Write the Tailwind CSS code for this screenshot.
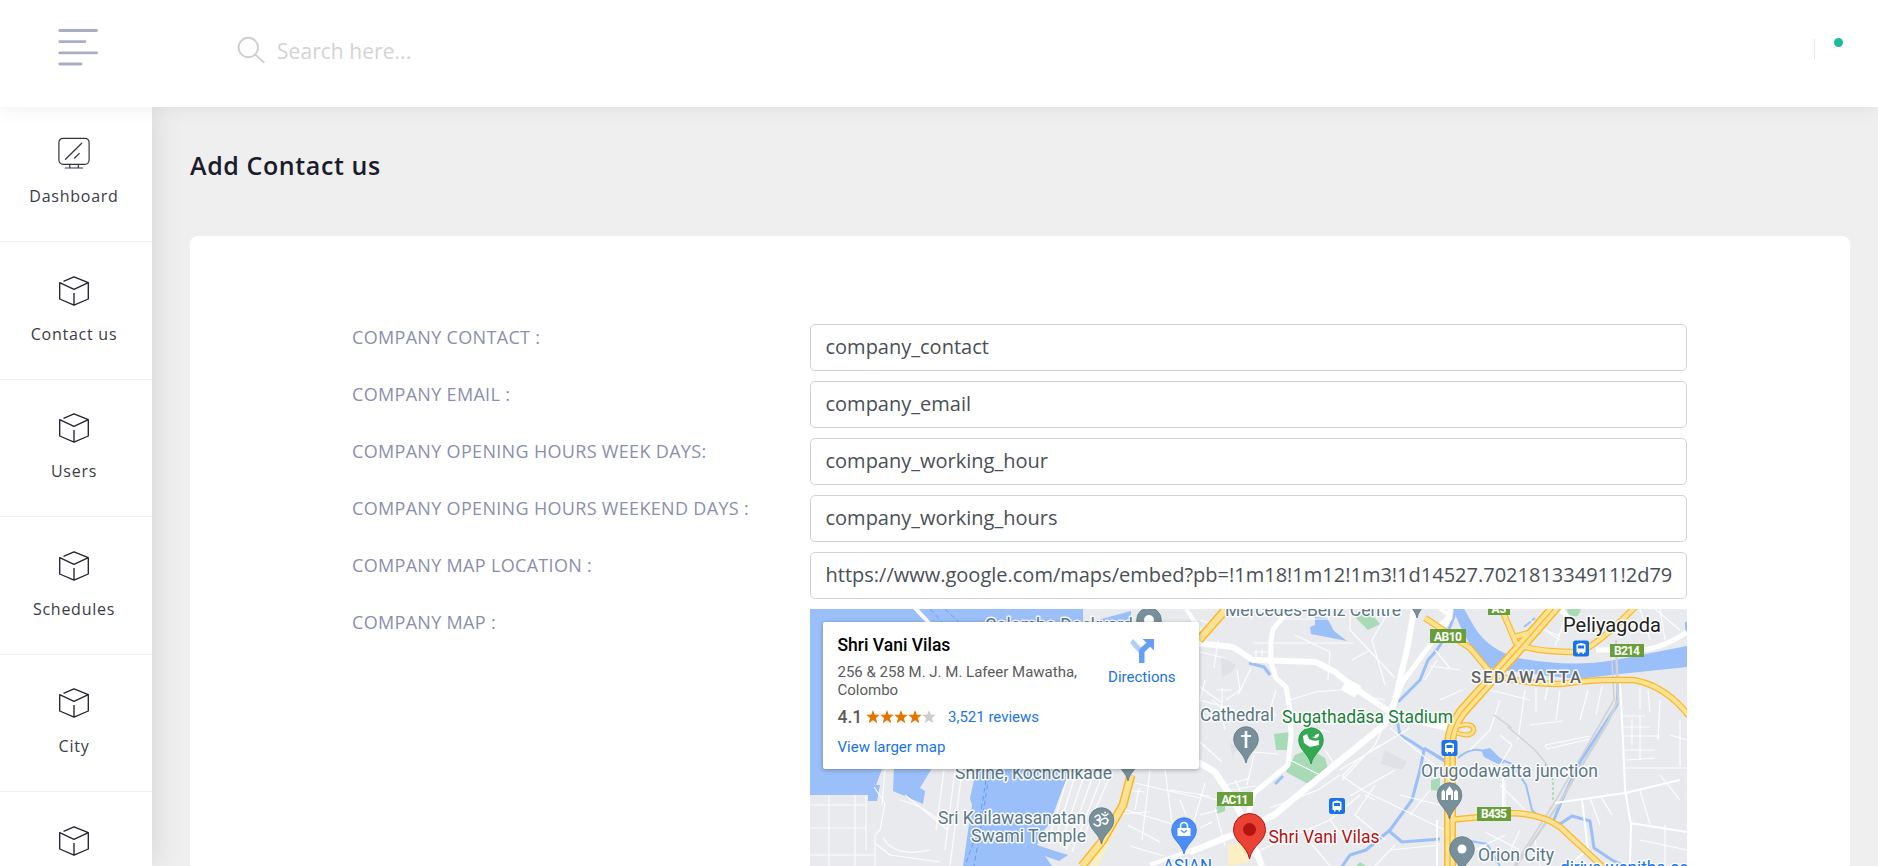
<!DOCTYPE html>
<html lang="en">
<head>
<meta charset="utf-8">
<title>Add Contact us</title>
<script src="https://cdn.jsdelivr.net/npm/@tailwindcss/browser@4"></script>
</head>
<body class="h-[866px] overflow-hidden bg-[#efefef] font-['Open_Sans',sans-serif] flex flex-col">
<svg class="hidden">
  <symbol id="cube" viewBox="0 0 32 32"><path d="M5.5 6.3 16 1.8 30.3 7.6V24L16 30.2 1.7 24V7.6L16 14.3 30.3 7.6M16 18v12" fill="none" stroke="#24242f" stroke-width="1.35" stroke-linejoin="round"/></symbol>
  <symbol id="pin" viewBox="-14 -14 28 40" overflow="visible"><path d="M0 24C-2.5 13-12.3 10-12.3 0a12.3 12.3 0 1 1 24.6 0C12.3 10 2.5 13 0 24Z"/></symbol>
</svg>

<header class="relative z-20 flex h-[107px] shrink-0 items-start bg-white shadow-[0_0_20px_rgba(0,0,0,0.08)]">
  <svg class="mt-[28px] ml-[58px]" width="40" height="40" viewBox="0 0 40 40" stroke="#a9aec6" stroke-width="2.8" stroke-linecap="round"><path d="M1.8 2.5H38.5M1.8 13.6H27M1.8 24.9H38.5M1.8 36H23"/></svg>
  <svg class="mt-[36px] ml-[139px]" width="29" height="29" viewBox="0 0 29 29" fill="none" stroke="#cfcfcf" stroke-width="1.9" stroke-linecap="round"><circle cx="11.3" cy="11.5" r="9.7"/><path d="M18.3 18.6 26.7 26.2"/></svg>
  <span class="mt-[36px] ml-[11px] text-[21px] leading-[30px] tracking-[0.05px] text-[#d3d3d3]">Search here...</span>
  <div class="mt-[38px] mr-[35px] ml-auto flex">
    <div class="mt-px h-5 w-px bg-[#e3e6ea]"></div>
    <div class="ml-[19px] size-[9px] rounded-full bg-[#1abc9c]"></div>
  </div>
</header>

<div class="flex min-h-0 flex-1">
  <nav class="z-10 flex w-[152px] shrink-0 flex-col overflow-visible bg-white pr-[4px] text-[16px] tracking-[0.75px] text-[#3b3b47] shadow-[0_0_30px_rgba(0,0,0,0.12)]">
    <a class="-mr-[4px] flex h-[135px] shrink-0 flex-col items-center border-b border-[#efefef] pt-[30px] pr-[4px]">
      <svg width="32" height="32" viewBox="0 0 32 32" fill="none" stroke="#343441" stroke-width="1.2" stroke-linecap="round"><rect x=".9" y="1.3" width="30.2" height="26" rx="4.2"/><path d="M7.5 22.3 23.7 6.2M16.4 21.2 21.3 16.4M11.8 27.3V31M20.3 27.3V31M7.3 31H24.5"/></svg>
      <span class="mt-[15px] leading-6">Dashboard</span></a>
    <a class="-mr-[4px] flex h-[137.5px] shrink-0 flex-col items-center border-b border-[#efefef] pt-[32.5px] pr-[4px]"><svg width="32" height="32"><use href="#cube"/></svg><span class="mt-[15px] leading-6">Contact us</span></a>
    <a class="-mr-[4px] flex h-[137.5px] shrink-0 flex-col items-center border-b border-[#efefef] pt-[32.5px] pr-[4px]"><svg width="32" height="32"><use href="#cube"/></svg><span class="mt-[15px] leading-6">Users</span></a>
    <a class="-mr-[4px] flex h-[137.5px] shrink-0 flex-col items-center border-b border-[#efefef] pt-[32.5px] pr-[4px]"><svg width="32" height="32"><use href="#cube"/></svg><span class="mt-[15px] leading-6">Schedules</span></a>
    <a class="-mr-[4px] flex h-[137.5px] shrink-0 flex-col items-center border-b border-[#efefef] pt-[32.5px] pr-[4px]"><svg width="32" height="32"><use href="#cube"/></svg><span class="mt-[15px] leading-6">City</span></a>
    <a class="-mr-[4px] flex shrink-0 flex-col items-center pt-[32.5px] pr-[4px]"><svg width="32" height="32"><use href="#cube"/></svg></a>
  </nav>

  <main class="flex min-w-0 flex-1 flex-col pt-[40px] pr-[28px] pl-[38px]">
    <h1 class="text-[25px] leading-[36px] font-semibold tracking-[0.6px] text-[#1b1b2b]">Add Contact us</h1>
    <section class="mt-[53px] flex flex-1 rounded-t-lg bg-white pt-[88px] pl-[162px]">
      <div class="flex w-[458px] flex-col text-[18px] leading-[27px] tracking-[0.32px] text-[#8a8fad]">
        <label class="h-[57px] shrink-0">COMPANY CONTACT :</label>
        <label class="h-[57px] shrink-0">COMPANY EMAIL :</label>
        <label class="h-[57px] shrink-0">COMPANY OPENING HOURS WEEK DAYS:</label>
        <label class="h-[57px] shrink-0">COMPANY OPENING HOURS WEEKEND DAYS :</label>
        <label class="h-[57px] shrink-0">COMPANY MAP LOCATION :</label>
        <label class="h-[57px] shrink-0">COMPANY MAP :</label>
      </div>
      <div class="flex w-[877px] flex-col text-[20px] text-[#495057]">
        <input class="mb-[10px] h-[47px] shrink-0 rounded-[5px] border border-[#ced4da] px-[14.5px] pb-[2px]" value="company_contact">
        <input class="mb-[10px] h-[47px] shrink-0 rounded-[5px] border border-[#ced4da] px-[14.5px] pb-[2px]" value="company_email">
        <input class="mb-[10px] h-[47px] shrink-0 rounded-[5px] border border-[#ced4da] px-[14.5px] pb-[2px]" value="company_working_hour">
        <input class="mb-[10px] h-[47px] shrink-0 rounded-[5px] border border-[#ced4da] px-[14.5px] pb-[2px]" value="company_working_hours">
        <input class="mb-[10px] h-[47px] shrink-0 rounded-[5px] border border-[#ced4da] px-[14.5px] pb-[2px]" value="https://www.google.com/maps/embed?pb=!1m18!1m12!1m3!1d14527.702181334911!2d79">
        <div class="relative h-[257px] shrink-0 overflow-hidden font-[Roboto,sans-serif]">
          <svg class="block" width="877" height="257" viewBox="810 609 877 257" fill="none" stroke-linejoin="round">
            <rect x="810" y="609" width="877" height="257" fill="#e8eaed"/>
            <!-- harbour and port basins -->
            <g fill="#9bbff9">
              <path d="M810 609H1083V700H882V769L876 785H880L877 801H868V795H810ZM1090 622 1131 611V625H1090ZM894 765 932 768 920 788 925 791 923 804 893 791ZM975 765H1073L1062 790 1050 823 1041 834 1037 845 1052 850 1068 855 1059 861 1045 856 1052 866H963L969 824 972 805 970 798 974 780Z"/>
              <path d="M1315 617 1327 618 1334 631 1347 641 1311 634 1310 627 1315 625ZM1453 609H1464L1475 628Q1489 650 1518 658 1570 668 1615 660L1687 646V667L1620 674 1578 679 1540 675 1488 668Q1468 648 1453 609ZM1685 622V633H1687V622Z"/>
              <path d="M1481 750 1490 748 1505 763 1498 764 1484 757Z"/>
            </g>
            <!-- parks and quiet zones -->
            <path d="M1295 755 1310 749 1325 758 1328 768 1308 784 1286 772ZM1274 734 1290 732 1288 750 1276 750ZM1355 617 1370 612 1380 624 1368 630ZM1217 803H1225V811L1216 814ZM1431 780 1440 778V791L1431 790ZM1567 609H1581L1578 616 1568 617ZM1360 862 1366 866H1356Z" fill="#a8dab5"/>
            <path d="M1221 657 1236 665 1232 672 1222 677ZM1385 750 1407 762 1402 770 1381 764ZM1230 742 1238 750 1232 756Z" fill="#dfe1e6"/>
            <path d="M1110 815 1120 820 1108 845 1098 866H1090L1096 850ZM1228 845 1245 842 1250 862 1228 866Z" fill="#fcefc3"/>
            <!-- creeks -->
            <g stroke="#9bbff9" stroke-width="3">
              <path d="M1456 609Q1448 640 1428 660L1420 680 1398 702M1397 720 1400 735 1412 742 1424 750 1420 770 1412 800 1390 830 1366 850 1350 855 1341 868" /><path d="M1424 748 1446 762M1388 830 1402 842 1440 839M1249 663 1264 667 1270 675M1275 784 1283 776"/>
              <path d="M1618 684 1617 705 1580 762 1562 800 1553 822 1560 824 1572 816 1590 821 1594 848 1612 860 1624 866"/>
              <path d="M1458 758Q1475 743 1490 755L1512 764 1526 785 1532 810 1540 818M1465 840 1487 844 1500 866M1430 751 1445 760M1524 627 1535 618" stroke-width="2"/>
            </g>
            <!-- side streets -->
            <g stroke="#fff" stroke-width="1.2" stroke-opacity=".9">
              <path d="M829 795V866M855 795V866M810 805H866M810 828H866M810 855H875M866 795V850M874 787 885 803 880 830 875 835M875 836V866M885 770 882 805M900 800Q930 808 944 826M905 795 948 830M876 844 890 855 940 862M944 770 936 830M955 770 945 850M962 770 950 866M883 838Q895 858 930 850"/>
              <path d="M1068 776 1050 835M1075 776 1055 840M1084 776 1060 846M1093 776 1066 850M1102 776 1072 852M1110 776 1082 840"/>
              <path d="M1150 770 1142 840M1165 770 1172 822M1170 790 1210 796M1135 783 1200 798M1123 790 1145 792M1120 808 1172 824M1205 783 1190 835M1128 825 1160 842M1130 846 1164 856M1180 800 1186 815M1139 788 1135 810M1119 814 1150 812M1215 808 1225 846M1200 828 1212 822"/>
              <path d="M1186 609 1200 637M1200 652 1225 658M1205 680 1200 700 1235 710M1218 640 1214 668M1200 687 1222 703M1237 670 1240 690 1226 700M1251 668 1238 695M1276 690 1270 710 1276 716M1222 762 1200 742M1253 752 1278 754M1254 755 1247 785M1254 652H1270M1256 650V658M1262 650V656M1200 620 1213 625M1246 609 1252 620M1232 690H1216M1222 688V708M1212 700 1220 706 1225 730M1235 780 1242 795M1227 785 1250 778M1228 790 1256 786M1200 795 1217 800M1200 815 1218 810"/>
              <path d="M1253 643H1354M1295 635 1330 652M1330 619H1285M1350 609V630L1395 678M1352 660 1370 650M1290 700 1315 692 1340 690M1330 652 1328 680M1300 725 1330 732M1325 750 1335 765M1290 760 1320 775M1384 725 1375 745 1342 780M1380 745 1358 760 1342 776 1362 790 1445 830M1390 728 1440 770M1340 775 1318 790 1270 808M1395 770 1350 796M1360 795 1330 820 1260 850M1330 820 1345 840M1375 785 1355 815 1385 840M1365 795 1375 800M1395 845 1375 866M1300 830 1330 866M1430 790 1410 815M1400 795 1440 805M1390 850 1440 845M1250 850 1262 866M1340 770 1410 728M1385 700 1365 696M1385 685 1372 640 1390 609"/>
              <path d="M1430 666 1460 670M1435 650 1450 668M1437 660 1425 680M1440 700 1462 690M1490 690 1530 700M1525 690 1518 740M1536 688V712M1548 686 1545 700M1560 690 1556 720M1530 725 1563 721M1545 745 1590 736M1547 749 1590 739M1545 745 1547 749M1588 690 1580 720M1602 686 1596 715M1660 700 1658 740M1648 690 1650 712M1640 687V710M1680 720V766M1670 735 1687 740M1622 716H1645M1622 727H1650M1624 736H1660M1625 750H1655M1632 719V745M1640 716V760M1626 760 1655 758"/>
              <path d="M1625 768H1687M1660 775 1680 800M1640 790 1650 825M1600 795 1612 815M1590 798 1600 825M1665 825V866M1640 840 1687 850M1500 700 1490 730 1470 750M1500 735 1512 745 1500 765M1505 780V815M1500 785 1530 815M1490 765 1500 770M1485 832 1520 850M1520 830 1505 862M1535 840 1540 866M1475 850 1505 835M1530 620 1560 640M1565 620 1555 646M1545 630 1560 636M1590 615 1600 630M1650 640 1640 609M1665 640 1660 609M1655 609 1680 630"/>
              <path d="M1503 774V815M1437 820V866" stroke-width="2"/>
            </g>
            <!-- railway -->
            <path d="M1616 640 1618 700 1608 722 1558 805 1516 866" stroke="#d0d3d6" stroke-width="2.5"/><path d="M1494 715 1512 728M1508 727 1535 750 1548 766" stroke="#d0d3d6" stroke-width="1.5"/><path d="M1612 660 1614 700 1556 800 1514 866" stroke="#cfd1d5" stroke-width="1.5"/>
            <path d="M1545 764 1553 780V802" stroke="#81c995" stroke-dasharray="3 2"/>
            <!-- wider streets -->
            <g stroke="#fff">
              <path d="M914 607 931 625M1186 609 1206 637" stroke-width="4"/>
              <path d="M1196 643 1233 647 1253 660 1316 662 1335 672 1353 687 1390 712 1418 721 1447 728" stroke-width="6"/><path d="M1344 684 1358 692" stroke-width="13"/>
              <path d="M1290 609 1274 628Q1270 634 1271 663L1276 678 1286 687 1290 710 1291 735 1288 765 1254 793 1248 815" stroke-width="5"/>
              <path d="M1414 609 1408 645 1395 700 1388 718" stroke-width="6"/>
              <path d="M1450 605V618L1402 683 1391 712" stroke-width="5"/>
              <path d="M1391 712 1384 725 1320 777 1274 815 1240 832 1190 852M1198 762 1215 772 1232 798 1244 820 1262 866" stroke-width="6.5"/>
              <path d="M1198 848 1150 865" stroke-width="4"/>
              <path d="M1440 609 1450 615 1430 635" stroke-width="4"/>
              <path d="M1596 650H1637Q1660 650 1687 632M1560 609 1573 622" stroke-width="5"/>
              <path d="M1620 683 1623 740 1625 790 1631 825 1630 866M1555 803 1625 793 1680 780M1582 800 1588 850 1575 860M1630 823 1687 832" stroke-width="2"/>
            </g>
            <!-- trunk roads: casing, then fill -->
            <g stroke="#f9b82c">
              <path d="M1557 605 1522 645 1495 675 1462 712Q1450 728 1450 745V868" stroke-width="12"/>
              <path d="M1425 618 1470 648 1490 672Q1510 683 1560 684 1590 680 1610 680H1633Q1665 685 1689 716M1500 605 1516 643Q1530 652 1580 652 1600 643 1637 605M1514 637 1540 630M1450 820 1480 817Q1530 806 1560 827L1604 868" stroke-width="6.5"/>
              <path d="M1459 726Q1473 722 1474 730 1471 738 1457 733" stroke-width="5"/>
              <path d="M1226 609 1199 640M1131 775 1123 805 1103 840 1082 866" stroke-width="9"/>
            </g>
            <g stroke="#fde293">
              <path d="M1557 605 1522 645 1495 675 1462 712Q1450 728 1450 745V868" stroke-width="9"/>
              <path d="M1425 618 1470 648 1490 672Q1510 683 1560 684 1590 680 1610 680H1633Q1665 685 1689 716M1500 605 1516 643Q1530 652 1580 652 1600 643 1637 605M1514 637 1540 630M1450 820 1480 817Q1530 806 1560 827L1604 868" stroke-width="4.2"/>
              <path d="M1459 726Q1473 722 1474 730 1471 738 1457 733" stroke-width="2.8"/>
              <path d="M1226 609 1199 640M1131 775 1123 805 1103 840 1082 866" stroke-width="6"/>
            </g>
            <path d="M1557 605 1522 645 1495 675 1462 712Q1450 728 1450 745V868" stroke="#f9b82c" stroke-width="1.2"/>
            <!-- ferry lines -->
            <path d="M930 609 945 625M945 609 965 628M986 780 978 830 965 866M990 769 982 820 974 866" stroke="#669df6" stroke-dasharray="5 3"/>
            <!-- route shields -->
            <g fill="#689f38"><path d="M1488 600H1510V615H1488ZM1430 629H1466V643H1430ZM1610 644H1644V657H1610ZM1477 807H1511V821H1477ZM1217 792H1253V806H1217Z"/></g>
            <g fill="#fff" font-size="12" font-weight="700" text-anchor="middle"><text x="1499" y="612.500">A3</text><text x="1448" y="640.5" textLength="28">AB10</text><text x="1627" y="655" textLength="26">B214</text><text x="1494" y="818" textLength="26">B435</text><text x="1235" y="803.5" textLength="27">AC11</text></g>
            <!-- place pins -->
            <g fill="#78909c" stroke="#5d7783" stroke-width=".8">
              <use href="#pin" x="1135" y="606" width="28" height="40"/><use href="#pin" x="1114" y="743" width="28" height="40"/><use href="#pin" x="1087.5" y="806" width="28" height="40"/><use href="#pin" x="1232" y="725" width="28" height="40"/><use href="#pin" x="1403" y="580" width="28" height="40"/><use href="#pin" x="1435.5" y="781" width="28" height="40"/><use href="#pin" x="1448" y="835" width="28" height="40"/>
              <use href="#pin" x="1297" y="726" width="28" height="40" fill="#34a853" stroke="#1e8e3e"/><use href="#pin" x="1170" y="816" width="28" height="40" fill="#4c8df6" stroke="#2f74e0"/>
            </g>
            <g fill="#fff">
              <circle cx="1149" cy="620" r="5"/><circle cx="1462" cy="849" r="4.5"/>
              <path d="M1244.7 731H1247.3V735H1251V737H1247.3V748H1244.7V737H1241V735H1244.7Z"/>
              <path d="M1303 736 1307 734 1309 739Q1314 742 1319 740V745L1310 747 1304 743ZM1312 737 1315 736.500V735L1319 733.500V736L1316 738.500Z"/>
              <path d="M1441.5 800V792L1443.5 789.5 1445 792V800ZM1446 800V791L1449.5 786 1453 791V800H1451V795H1448V800ZM1454 800V792L1456 789.5 1458 792V800Z"/>
              <path d="M1177.5 828H1190.5V836H1177.5Z"/>
            </g>
            <path d="M1180.5 828V826A3.5 3.5 0 0 1 1187.5 826V828" stroke="#fff" stroke-width="1.6"/><path d="M1181 830Q1184 834.5 1187 830" stroke="#4c8df6" stroke-width="1.3"/>
            <path d="M1095 817Q1099 813 1100 817 1100 820 1097 820 1102 821 1100 825 1097 827 1094 824M1100 821Q1105 816 1108 820 1107 826 1103 823M1102 814Q1105 817 1108 814" stroke="#fff" stroke-width="1.7" stroke-linecap="round"/><circle cx="1105.2" cy="812.6" r="1" fill="#fff"/>
            <path d="M1249.5 859C1247 845 1233.500 842 1233.500 829.5a16 16 0 1 1 32 0C1265.500 842 1252 845 1249.500 859Z" fill="#ea4335" stroke="#b31412"/><circle cx="1249.500" cy="829.500" r="6.500" fill="#b31412"/>
            <!-- bus stops -->
            <g id="bus"><rect x="1441.500" y="740" width="16" height="16" rx="2.500" fill="#1a73e8"/><path d="M1445 744Q1449.500 741 1454 744V752H1452.500V753.500H1451V752H1448V753.500H1446.500V752H1445Z" fill="#fff"/><path d="M1446.500 745H1452.500V748H1446.500Z" fill="#1a73e8"/></g>
            <use href="#bus" x="-112.500" y="58"/><use href="#bus" x="131.500" y="-99.500"/>
            <!-- labels -->
            <g font-size="17.500" stroke="#fff" stroke-width="3" paint-order="stroke" stroke-opacity=".9" fill="#5b7886">
              <text x="985" y="631" textLength="148" lengthAdjust="spacingAndGlyphs">Colombo Dockyard</text>
              <text x="955" y="779" textLength="157" lengthAdjust="spacingAndGlyphs">Shrine, Kochchikade</text>
              <text x="938" y="824" textLength="148" lengthAdjust="spacingAndGlyphs">Sri Kailawasanatan</text>
              <text x="971" y="841.500" textLength="115" lengthAdjust="spacingAndGlyphs">Swami Temple</text>
              <text x="1225" y="616" textLength="176" lengthAdjust="spacingAndGlyphs">Mercedes-Benz Centre</text>
              <text x="1200" y="721" textLength="74" lengthAdjust="spacingAndGlyphs">Cathedral</text>
              <text x="1421" y="776.500" textLength="177" lengthAdjust="spacingAndGlyphs">Orugodawatta junction</text>
              <text x="1478" y="861" textLength="76" lengthAdjust="spacingAndGlyphs">Orion City</text>
              <text x="1282" y="722.500" textLength="171" fill="#188038" lengthAdjust="spacingAndGlyphs">Sugathadāsa Stadium</text>
              <text x="1268.500" y="842.500" textLength="111" fill="#b31412" lengthAdjust="spacingAndGlyphs">Shri Vani Vilas</text>
              <text x="1163" y="872" textLength="49" fill="#1a73e8" lengthAdjust="spacingAndGlyphs">ASIAN</text>
              <text x="1560" y="874" textLength="128" fill="#1a73e8" lengthAdjust="spacingAndGlyphs">diriya wenitha ec</text>
              <text x="1563" y="632" textLength="98" font-size="20" fill="#202124" lengthAdjust="spacingAndGlyphs">Peliyagoda</text>
              <text x="1471" y="682.500" textLength="110" font-size="16.500" font-weight="500" fill="#5f6368">SEDAWATTA</text>
            </g>
          </svg>
          <div class="absolute top-[13px] left-[13px] flex h-[147px] w-[376px] justify-between rounded-[2px] bg-white pr-[23.500px] pl-[14.500px] text-[15px] leading-[18px] text-[#5b5b5b] shadow-[0_1px_4px_rgba(0,0,0,0.3)]">
            <div class="pt-[12px]">
              <div class="text-[17.5px] leading-[22px] font-medium text-black">Shri Vani Vilas</div>
              <div class="mt-[7px]">256 &amp; 258 M. J. M. Lafeer Mawatha,<br>Colombo</div>
              <div class="mt-[8px] flex items-center leading-5">
                <span class="w-[28px] text-[17.5px] font-medium">4.1</span>
                <svg class="-mt-px" width="70" height="14" viewBox="0 0 70 14"><path id="st" fill="#e37400" d="M7 0 8.800 4.800H13.800L9.900 8 11.300 13.300 7 10.300 2.700 13.300 4.100 8 .2 4.800H5.200Z"/><use href="#st" x="14"/><use href="#st" x="28"/><use href="#st" x="42"/><path transform="translate(56)" fill="#ccc" d="M7 0 8.800 4.800H13.800L9.900 8 11.300 13.300 7 10.300 2.700 13.300 4.100 8 .2 4.800H5.200Z"/></svg>
                <span class="ml-[12.500px] text-[#1a73e8]">3,521 reviews</span>
              </div>
              <div class="mt-[11px] text-[#1a73e8]">View larger map</div>
            </div>
            <div class="flex flex-col items-center pt-[17px] text-[#1a73e8]">
              <svg width="24" height="24" viewBox="0 0 24 24"><path d="M3 0 12 9.500 9 14 0 4Z" fill="#b3cdfb"/><path d="M12.500 0H24V11.500L20 7.800 14.500 13V24H9V12.500Q9 10 11 8.500L16.500 3.800Z" fill="#669df6"/></svg>
              <span class="mt-[5px]">Directions</span>
            </div>
          </div>
        </div>
      </div>
    </section>
  </main>
</div>
</body>
</html>
